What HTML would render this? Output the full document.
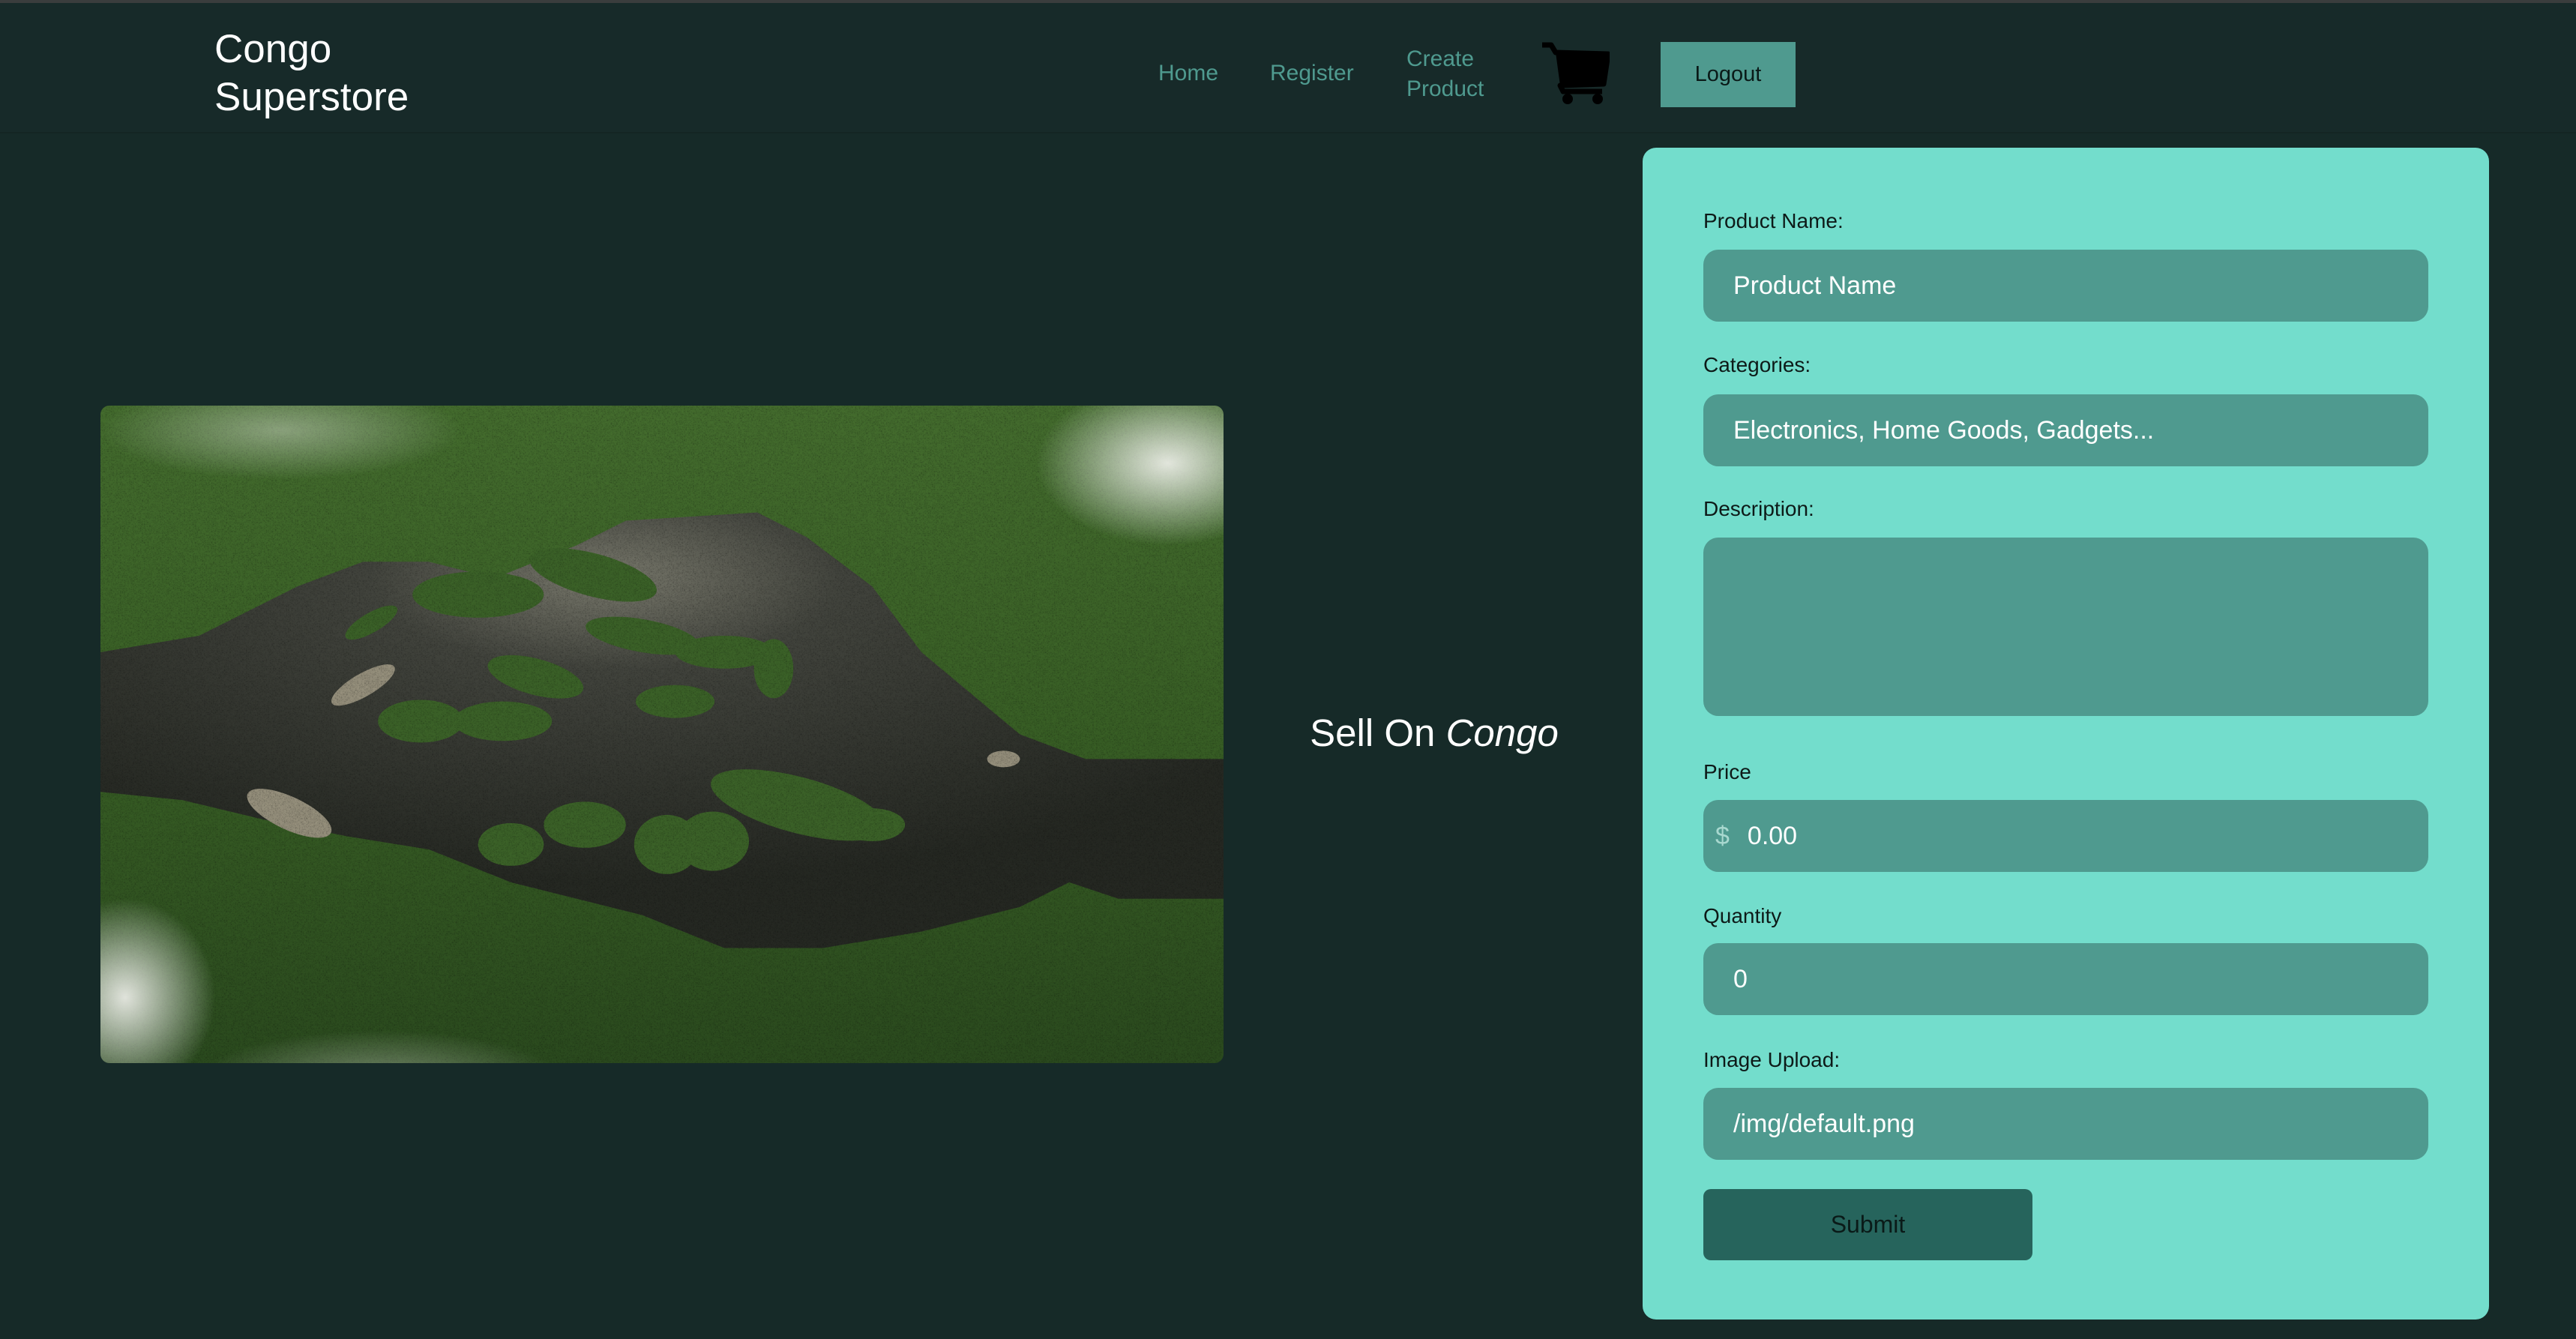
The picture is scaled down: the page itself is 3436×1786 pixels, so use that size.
<!DOCTYPE html>
<html><head><meta charset="utf-8"><style>
*{margin:0;padding:0;box-sizing:border-box}
html,body{width:3436px;height:1786px;overflow:hidden;background:#162a28;font-family:"Liberation Sans",sans-serif}
.top{position:absolute;left:0;top:0;width:3436px;height:4px;background:#3a3d3d}
.nav{position:absolute;left:0;top:4px;width:3436px;height:174px;background:#172a29;border-bottom:2px solid #142523}
.logo{position:absolute;left:286px;top:30px;color:#fff;font-size:53px;line-height:64px}
.nl{position:absolute;color:#4f9a8f;font-size:30px;line-height:40px}
.logout{position:absolute;left:2215px;top:52px;width:180px;height:87px;background:#4f9a8f;color:#0a1a18;font-size:29px;line-height:87px;text-align:center}
.sell{position:absolute;left:1640px;top:948px;width:546px;text-align:center;color:#fff;font-size:51px}
.img{position:absolute;left:134px;top:541px;width:1498px;height:877px;border-radius:12px;overflow:hidden}
.card{position:absolute;left:2191px;top:197px;width:1129px;height:1563px;background:#73ddcc;border-radius:18px}
.lb{position:absolute;left:81px;color:#0d1a18;font-size:28px}
.in{position:absolute;left:81px;width:967px;height:96px;background:#4f9a8f;border-radius:20px;color:#fff;font-size:34px;line-height:96px;padding-left:40px}
.sub{position:absolute;left:81px;top:1389px;width:439px;height:95px;background:#26645c;border-radius:10px;color:#0a1a18;font-size:32px;line-height:95px;text-align:center}
</style></head><body>
<div class="top"></div>
<div class="nav">
<div class="logo">Congo<br>Superstore</div>
<div class="nl" style="left:1545px;top:74px">Home</div>
<div class="nl" style="left:1694px;top:74px">Register</div>
<div class="nl" style="left:1876px;top:55px">Create</div>
<div class="nl" style="left:1876px;top:95px">Product</div>
<svg style="position:absolute;left:2055px;top:52px" width="92" height="86" viewBox="0 0 92 86">
<path d="M2 4 L14 4 L20 14 L90 16 L84 56 L26 58 L30 66 L82 66" fill="none" stroke="#000" stroke-width="7" stroke-linejoin="round"/>
<path d="M20 14 L90 16 L84 56 L26 58 Z" fill="#000"/>
<circle cx="36" cy="76" r="7" fill="#000"/><circle cx="76" cy="76" r="7" fill="#000"/>
</svg>
<div class="logout">Logout</div>
</div>
<div class="img">
<svg width="1498" height="877" viewBox="0 0 684 400" preserveAspectRatio="none">
<defs>
<radialGradient id="w" cx="0.45" cy="0.15" r="0.7"><stop offset="0" stop-color="#7d7d70"/><stop offset="0.3" stop-color="#44463f"/><stop offset="1" stop-color="#262923"/></radialGradient>
<radialGradient id="c" cx="0.5" cy="0.5" r="0.5"><stop offset="0" stop-color="#f4f4f0" stop-opacity="0.9"/><stop offset="1" stop-color="#fff" stop-opacity="0"/></radialGradient>
<linearGradient id="f" x1="0" y1="0" x2="0" y2="1"><stop offset="0" stop-color="#46702f"/><stop offset="0.5" stop-color="#3a6226"/><stop offset="1" stop-color="#2c4d1f"/></linearGradient>
<filter id="n"><feTurbulence baseFrequency="0.9" numOctaves="2" seed="3"/><feColorMatrix values="0 0 0 0 0  0 0 0 0 0  0 0 0 0 0  0 0 0 0.35 0"/><feComposite in2="SourceGraphic" operator="in"/></filter>
</defs>
<rect width="684" height="400" fill="url(#f)"/>
<path d="M0 150 L60 140 L120 110 L160 95 L200 95 L240 105 L290 85 L320 70 L400 65 L430 80 L470 110 L500 150 L530 175 L560 200 L600 215 L684 215 L684 300 L620 300 L590 290 L560 305 L500 320 L440 330 L380 330 L330 310 L250 290 L200 270 L150 262 L100 252 L50 240 L0 235 Z" fill="url(#w)"/>
<g fill="#3d6529">
<ellipse cx="230" cy="115" rx="40" ry="14"/><ellipse cx="300" cy="103" rx="40" ry="13" transform="rotate(15 300 103)"/>
<ellipse cx="165" cy="132" rx="18" ry="6" transform="rotate(-30 165 132)"/>
<ellipse cx="330" cy="140" rx="35" ry="10" transform="rotate(10 330 140)"/><ellipse cx="380" cy="150" rx="30" ry="10"/>
<ellipse cx="265" cy="165" rx="30" ry="11" transform="rotate(15 265 165)"/><ellipse cx="350" cy="180" rx="24" ry="10"/>
<ellipse cx="245" cy="192" rx="30" ry="12"/><ellipse cx="195" cy="192" rx="26" ry="13"/>
<ellipse cx="410" cy="160" rx="12" ry="18"/><ellipse cx="425" cy="243" rx="55" ry="17" transform="rotate(15 425 243)"/>
<ellipse cx="295" cy="255" rx="25" ry="14"/><ellipse cx="345" cy="267" rx="20" ry="18"/><ellipse cx="373" cy="265" rx="22" ry="18"/>
<ellipse cx="250" cy="267" rx="20" ry="13"/><ellipse cx="470" cy="255" rx="20" ry="10"/>
</g>
<g fill="#9a9480"><ellipse cx="160" cy="170" rx="22" ry="7" transform="rotate(-30 160 170)"/><ellipse cx="115" cy="248" rx="28" ry="10" transform="rotate(25 115 248)"/><ellipse cx="550" cy="215" rx="10" ry="5"/></g>
<rect width="684" height="400" fill="#000" filter="url(#n)"/>
<ellipse cx="650" cy="35" rx="80" ry="50" fill="url(#c)"/>
<ellipse cx="110" cy="15" rx="110" ry="30" fill="url(#c)" opacity="0.45"/>
<ellipse cx="15" cy="360" rx="55" ry="60" fill="url(#c)"/>
<ellipse cx="170" cy="410" rx="110" ry="30" fill="url(#c)" opacity="0.4"/>
</svg>
</div>
<div class="sell">Sell On <i>Congo</i></div>
<div class="card">
<div class="lb" style="top:82px">Product Name:</div>
<div class="in" style="top:136px">Product Name</div>
<div class="lb" style="top:274px">Categories:</div>
<div class="in" style="top:329px">Electronics, Home Goods, Gadgets...</div>
<div class="lb" style="top:466px">Description:</div>
<div class="in" style="top:520px;height:238px"></div>
<div class="lb" style="top:817px">Price</div>
<div class="in" style="top:870px;padding-left:16px"><span style="color:#a8d8cf;margin-right:24px">$</span>0.00</div>
<div class="lb" style="top:1009px">Quantity</div>
<div class="in" style="top:1061px">0</div>
<div class="lb" style="top:1201px">Image Upload:</div>
<div class="in" style="top:1254px">/img/default.png</div>
<div class="sub">Submit</div>
</div>
</body></html>
